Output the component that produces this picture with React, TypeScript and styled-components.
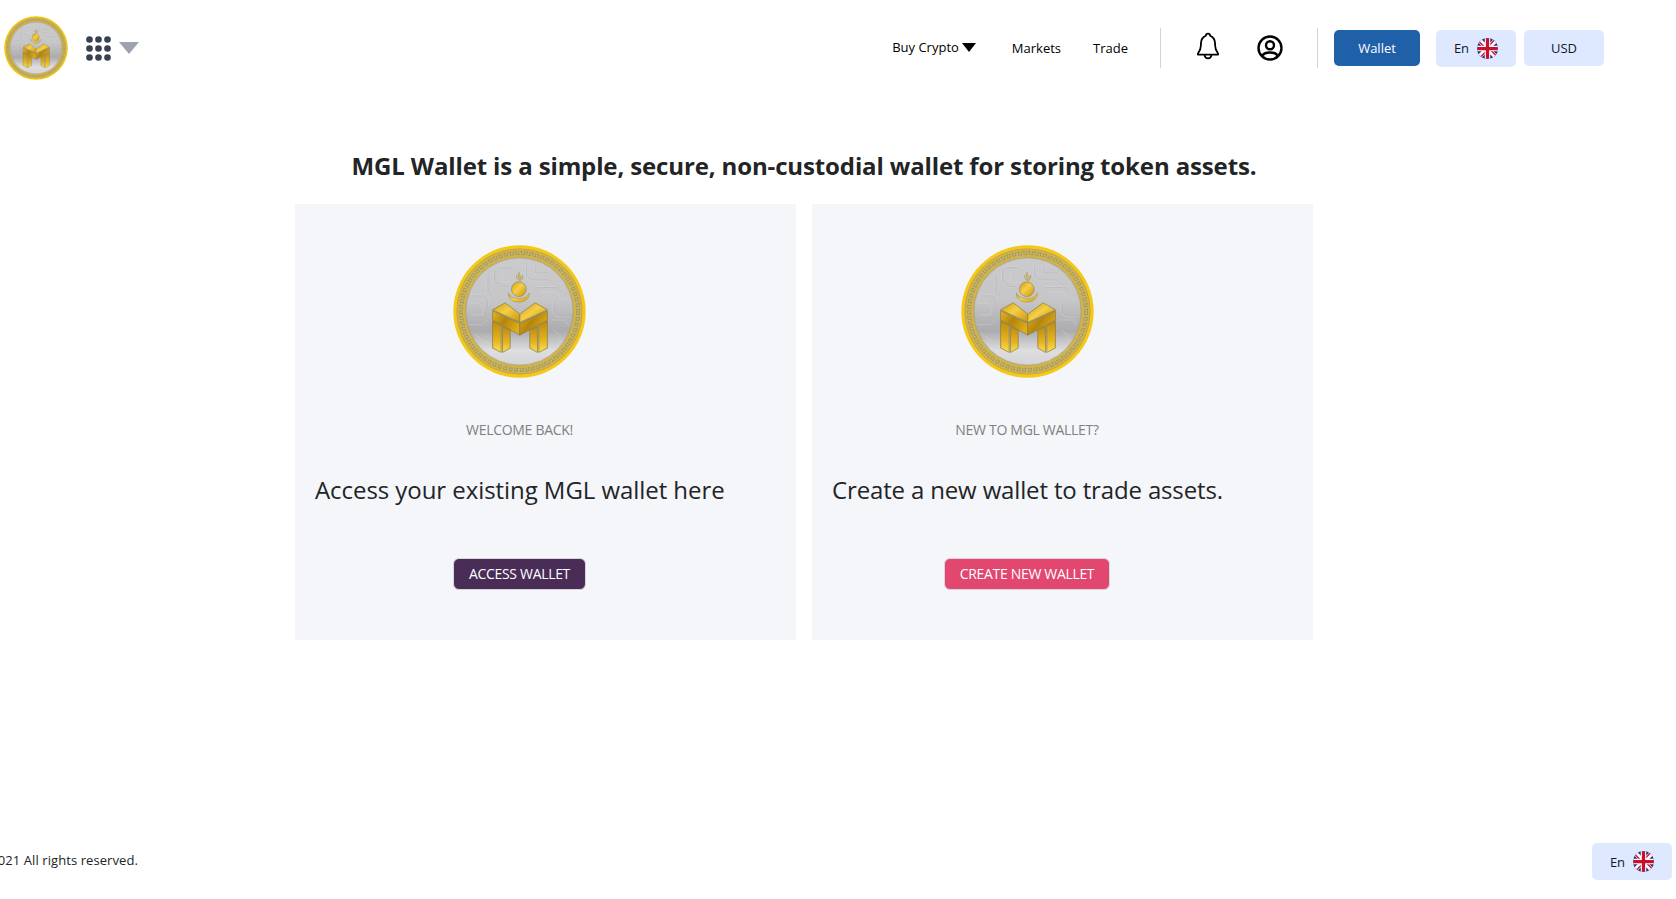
import React, { useId } from "react";
import styled, { createGlobalStyle } from "styled-components";

const GlobalStyle = createGlobalStyle`
  *, *::before, *::after { box-sizing: border-box; }
  html, body { margin: 0; padding: 0; background: #fff; overflow: hidden; }
  body { font-family: "Open Sans", "Noto Sans", sans-serif; color: #222426; }
  button { font-family: inherit; cursor: pointer; }
`;

const Page = styled.div`
  display: flex;
  flex-direction: column;
  height: 899px;
  overflow: hidden;
`;

const Header = styled.header`
  display: flex;
  align-items: center;
  height: 96px;
  padding: 0 72px 0 4px;
`;

const Brand = styled.div`
  display: flex;
  align-items: center;
  margin-right: auto;
`;

const AppsButton = styled.button`
  display: flex;
  align-items: center;
  gap: 8px;
  margin-left: 18px;
  padding: 0;
  border: 0;
  background: none;
`;

const Nav = styled.nav`
  display: flex;
  align-items: center;
`;

const NavLink = styled.a<{ $gap: number; $raise?: boolean }>`
  display: flex;
  align-items: center;
  gap: 3px;
  margin-right: ${(p) => p.$gap}px;
  padding-bottom: ${(p) => (p.$raise ? 2 : 0)}px;
  font-size: 13px;
  line-height: 20px;
  color: #000;
  white-space: nowrap;
`;

const Divider = styled.span`
  width: 1px;
  height: 40px;
  background: #d1d5db;
`;

const IconGroup = styled.div`
  display: flex;
  align-items: center;
  gap: 37px;
  padding: 0 34px 0 35px;
`;

const Actions = styled.div`
  display: flex;
  align-items: flex-start;
  height: 37px;
  margin-left: 16px;
`;

const WalletButton = styled.button`
  width: 86px;
  height: 36px;
  margin-right: 16px;
  padding: 0;
  border: 0;
  border-radius: 5px;
  background: #2060a8;
  color: #fff;
  font-size: 13px;
`;

const SoftButton = styled.button<{ $height: number }>`
  display: flex;
  align-items: center;
  justify-content: center;
  gap: 8px;
  width: 80px;
  height: ${(p) => p.$height}px;
  padding: 0;
  border: 0;
  border-radius: 5px;
  background: #dee9ff;
  color: #111827;
  font-size: 13px;

  & + & { margin-left: 8px; }
`;

const Main = styled.main`
  display: flex;
  flex-direction: column;
  width: 1018px;
  margin-left: 295px;
`;

const Heading = styled.h1`
  margin: 52px 0 20px;
  font-size: 24px;
  line-height: 36px;
  font-weight: 700;
  letter-spacing: -0.13px;
  text-align: center;
  white-space: nowrap;
`;

const Cards = styled.div`
  display: grid;
  grid-template-columns: 1fr 1fr;
  gap: 16px;
`;

const Card = styled.section`
  display: flex;
  height: 436px;
  padding: 41px 20px 0;
  background: #f4f6fa;
`;

const CardColumn = styled.div<{ $width: number }>`
  display: flex;
  flex-direction: column;
  align-items: center;
  width: ${(p) => p.$width}px;
`;

const Eyebrow = styled.p`
  margin: 42px 0 0;
  font-size: 14px;
  line-height: 20px;
  letter-spacing: -0.3px;
  color: #808080;
  white-space: nowrap;
`;

const CardTitle = styled.h2<{ $tracking: number }>`
  align-self: flex-start;
  margin: 32px 0 0;
  font-size: 24px;
  line-height: 36px;
  font-weight: 400;
  letter-spacing: ${(p) => p.$tracking}px;
  white-space: nowrap;
`;

const CardButton = styled.button<{ $color: string; $width: number }>`
  width: ${(p) => p.$width}px;
  height: 32px;
  margin-top: 50px;
  padding: 0 0 1px;
  border: 1px solid #d8d5de;
  border-radius: 6px;
  background: ${(p) => p.$color};
  color: #fff;
  font-size: 14px;
  line-height: 20px;
  letter-spacing: -0.32px;
  white-space: nowrap;
`;

const Footer = styled.footer`
  display: flex;
  align-items: center;
  justify-content: space-between;
  height: 37px;
  margin-top: auto;
  margin-bottom: 19px;
  padding-right: 4px;
`;

const Copyright = styled.div`
  display: flex;
  justify-content: flex-end;
  width: 138px;
  padding-bottom: 3px;
  font-size: 13px;
  line-height: 20px;
  letter-spacing: 0.08px;
  white-space: nowrap;
`;

const Drawing = styled.svg`
  display: block;
  flex: none;
`;

function Coin({ size }: { size: number }) {
  const id = useId().replace(/[^a-zA-Z0-9]/g, "");
  const url = (name: string) => `url(#${id}${name})`;
  return (
    <Drawing width={size} height={size} viewBox="38 30 400 400" aria-label="MGL coin">
      <defs>
        <linearGradient id={`${id}silver`} x1="0" y1="0" x2="0" y2="1">
          <stop offset="0" stopColor="#cbcbcd" />
          <stop offset="0.4" stopColor="#c6c6c8" />
          <stop offset="0.68" stopColor="#acacae" />
          <stop offset="0.86" stopColor="#dedee1" />
          <stop offset="1" stopColor="#d4d4d7" />
        </linearGradient>
        <linearGradient id={`${id}gold`} x1="0" y1="0" x2="1" y2="1">
          <stop offset="0" stopColor="#cf9a10" />
          <stop offset="0.45" stopColor="#f5cf44" />
          <stop offset="1" stopColor="#cb930a" />
        </linearGradient>
        <linearGradient id={`${id}dark`} x1="0" y1="0" x2="1" y2="0.6">
          <stop offset="0" stopColor="#e6b71f" />
          <stop offset="0.5" stopColor="#b5850c" />
          <stop offset="1" stopColor="#dfad16" />
        </linearGradient>
        <linearGradient id={`${id}leg`} x1="0" y1="0" x2="0" y2="1">
          <stop offset="0" stopColor="#be8a0a" />
          <stop offset="0.6" stopColor="#e4b31f" />
          <stop offset="1" stopColor="#ffe04e" />
        </linearGradient>
      </defs>
      <circle cx="238" cy="230" r="199" fill="#f5c816" />
      <circle cx="238" cy="230" r="189" fill="#c8b465" />
      <g fill="none" stroke="#d9b52c">
        <circle cx="238" cy="230" r="184" strokeWidth="4" strokeDasharray="15 4" />
        <circle cx="238" cy="230" r="168" strokeWidth="4" strokeDasharray="13 5" />
      </g>
      <g fill="none" stroke="#a3945c">
        <circle cx="238" cy="230" r="188.5" strokeWidth="1.5" />
        <circle cx="238" cy="230" r="180.5" strokeWidth="2.5" strokeDasharray="9 8" />
        <circle cx="238" cy="230" r="176" strokeWidth="11" strokeDasharray="2.5 6" />
        <circle cx="238" cy="230" r="171.5" strokeWidth="2.5" strokeDasharray="8 9" />
      </g>
      <circle cx="238" cy="230" r="163" fill={url("silver")} stroke="#c9ac45" strokeWidth="3" />
      <circle cx="238" cy="230" r="161" fill="none" stroke="#a09a86" strokeWidth="1.5" />
      <g fill="none" stroke="#dcdcde" strokeWidth="2" opacity="0.6">
        <path d="M160 105v34l18 18h22M140 120v55l14 14M170 95h40l12 12M186 110v32h26" />
        <path d="M98 180h34l12 12v24M88 204h28l16 16M84 270h44l14-14M90 240h38v-18" />
        <path d="M256 92v32l16 14h52l14 14M282 94v22h42M290 155h64l12 12M300 172h44l20 20h18" />
        <path d="M338 200v34l16 12h36M334 256h40l12 14M340 286l20 16v22M100 296l34 22h12M218 350v38M252 330v50l14 10M270 376h40" />
      </g>
      <g fill="none" stroke="#a9a9ac" strokeWidth="1.5" opacity="0.7">
        <path d="M163 105v34l18 16h22M143 123v52l14 12M173 98h37l12 12M98 183h34l10 12v24M84 273h44l14-14" />
        <path d="M259 92v32l14 11h52l14 14M285 94v20h42M290 158h64l12 12M341 200v34l16 9h36M334 259h40M103 294l34 22h12" />
      </g>
      <g transform="translate(150 75)" strokeLinejoin="round">
        <path d="M88 36c-3 6 0 9 3 12 3 3 1 7-2 7s-6-3-3-8c-4 2-3-6 2-11zM79 46c-2 14 16 18 19 0 2 20-18 23-19 0z" fill="#d8bb3c" stroke="#99915f" strokeWidth="1.2" />
        <circle cx="86" cy="88" r="22" fill={url("gold")} stroke="#8b8260" strokeWidth="2" />
        <path d="M55 99c9 23 53 23 63 0 2 13-10 28-32 28s-34-15-31-28z" fill={url("gold")} stroke="#9a9370" strokeWidth="1.5" />
        <g stroke="#8a7d4c" strokeWidth="2.2">
          <path d="M7 150L45 129L89 163V188Z" fill={url("gold")} />
          <path d="M172 150L135 129L89 163V188Z" fill={url("gold")} />
          <path d="M7 153L89 191V226L7 181Z" fill={url("dark")} />
          <path d="M172 153L89 191V226L172 181Z" fill={url("dark")} />
          <path d="M7 183L33 197V278L7 265Z" fill={url("leg")} />
          <path d="M37 200L60 211V265L37 278Z" fill={url("leg")} />
          <path d="M172 183L146 197V278L172 265Z" fill={url("leg")} />
          <path d="M142 200L119 211V265L142 278Z" fill={url("leg")} />
        </g>
      </g>
    </Drawing>
  );
}

function AppsIcon() {
  const steps = [3.5, 12.5, 21.5];
  return (
    <Drawing width="25" height="25" viewBox="0 0 25 25" fill="#374151">
      {steps.map((y) => steps.map((x) => <circle key={`${x}-${y}`} cx={x} cy={y} r="3.3" />))}
    </Drawing>
  );
}

function Caret({ width, height, color }: { width: number; height: number; color: string }) {
  return (
    <Drawing width={width} height={height} viewBox="0 0 20 12" preserveAspectRatio="none" fill={color}>
      <path d="M0 0H20L10 12Z" />
    </Drawing>
  );
}

function BellIcon() {
  return (
    <Drawing width="24" height="32" viewBox="0 0 24 32" fill="none" stroke="#000" strokeWidth="1.8" strokeLinejoin="round">
      <path d="M10 3.6C10 1 14 1 14 3.6C17.4 5 19 7.8 19.1 11.5V13.5C19.2 17.5 20.5 19.4 21.9 21.2Q22.4 22.1 22 22.6H2Q1.6 22.1 2.1 21.2C3.5 19.4 4.8 17.5 4.9 13.5V11.5C5 7.8 6.6 5 10 3.6Z" />
      <path d="M8.6 22.8C8.8 27.6 15.2 27.6 15.4 22.8" />
    </Drawing>
  );
}

function UserIcon() {
  return (
    <Drawing width="26" height="26" viewBox="0 0 26 26" fill="none" stroke="#000" strokeWidth="2.4">
      <circle cx="13" cy="13" r="11.5" />
      <circle cx="13" cy="10.2" r="4" />
      <path d="M5.2 21.2C7 16.3 19 16.3 20.8 21.2" />
    </Drawing>
  );
}

function BritishFlag() {
  const id = useId().replace(/[^a-zA-Z0-9]/g, "");
  return (
    <Drawing width="21" height="21" viewBox="0 0 42 42">
      <clipPath id={id}>
        <circle cx="21" cy="21" r="21" />
      </clipPath>
      <g clipPath={`url(#${id})`}>
        <path d="M0 0H42V42H0Z" fill="#29337a" />
        <path d="M0 0L42 42M42 0L0 42" stroke="#fff" strokeWidth="9" />
        <path d="M4 7L17 20M38 35L25 22M35 4L22 17M7 38L20 25" stroke="#d0103a" strokeWidth="2.8" />
        <path d="M21 0V42M0 21H42" stroke="#fff" strokeWidth="11" />
        <path d="M21 0V42M0 21H42" stroke="#c8102e" strokeWidth="6.5" />
      </g>
    </Drawing>
  );
}

type WalletCardProps = {
  width: number;
  eyebrow: string;
  title: string;
  tracking: number;
  action: string;
  actionWidth: number;
  color: string;
};

function WalletCard({ width, eyebrow, title, tracking, action, actionWidth, color }: WalletCardProps) {
  return (
    <Card>
      <CardColumn $width={width}>
        <Coin size={133} />
        <Eyebrow>{eyebrow}</Eyebrow>
        <CardTitle $tracking={tracking}>{title}</CardTitle>
        <CardButton $color={color} $width={actionWidth}>{action}</CardButton>
      </CardColumn>
    </Card>
  );
}

export default function App() {
  return (
    <Page>
      <GlobalStyle />
      <Header>
        <Brand>
          <Coin size={64} />
          <AppsButton aria-label="Apps">
            <AppsIcon />
            <Caret width={20} height={12} color="#9ca3af" />
          </AppsButton>
        </Brand>
        <Nav>
          <NavLink $gap={36} $raise>
            Buy Crypto
            <Caret width={14} height={9} color="#000" />
          </NavLink>
          <NavLink $gap={32}>Markets</NavLink>
          <NavLink $gap={32}>Trade</NavLink>
        </Nav>
        <Divider />
        <IconGroup>
          <BellIcon />
          <UserIcon />
        </IconGroup>
        <Divider />
        <Actions>
          <WalletButton>Wallet</WalletButton>
          <SoftButton $height={37}>
            En
            <BritishFlag />
          </SoftButton>
          <SoftButton $height={36}>USD</SoftButton>
        </Actions>
      </Header>
      <Main>
        <Heading>MGL Wallet is a simple, secure, non-custodial wallet for storing token assets.</Heading>
        <Cards>
          <WalletCard
            width={409}
            eyebrow="WELCOME BACK!"
            title="Access your existing MGL wallet here"
            tracking={-0.06}
            action="ACCESS WALLET"
            actionWidth={133}
            color="#4a2d57"
          />
          <WalletCard
            width={390}
            eyebrow="NEW TO MGL WALLET?"
            title="Create a new wallet to trade assets."
            tracking={-0.15}
            action="CREATE NEW WALLET"
            actionWidth={166}
            color="#e1476f"
          />
        </Cards>
      </Main>
      <Footer>
        <Copyright>© 2021 All rights reserved.</Copyright>
        <SoftButton $height={37}>
          En
          <BritishFlag />
        </SoftButton>
      </Footer>
    </Page>
  );
}
